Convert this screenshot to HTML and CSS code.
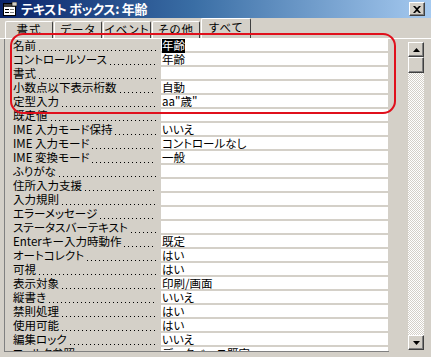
FILE: index.html
```html
<!DOCTYPE html>
<html lang="ja">
<head>
  <meta charset="UTF-8">
  <title>テキスト ボックス: 年齢</title>
  <link rel="stylesheet" href="styles.css">
</head>
<body>
  <div class="window">
    <div class="titlebar">
      <svg class="app-icon" width="14" height="14" viewBox="0 0 14 14">
        <rect x="0.5" y="1.5" width="12" height="12" fill="#fff" stroke="#000"/>
        <rect x="1" y="2" width="11" height="3" fill="#404040"/>
        <rect x="2" y="7" width="4" height="1" fill="#000"/>
        <rect x="7" y="7" width="4" height="1" fill="#808080"/>
        <rect x="2" y="10" width="4" height="1" fill="#000"/>
        <rect x="7" y="10" width="4" height="1" fill="#808080"/>
        <rect x="9" y="0" width="5" height="4" fill="#d4d0c8" stroke="#000" stroke-width="0.6"/>
      </svg>
      <span class="title">テキスト ボックス: 年齢</span>
      <div class="close">
        <svg width="8" height="7" viewBox="0 0 8 7">
          <path d="M0 0 L2 0 L4 2 L6 0 L8 0 L5 3.5 L8 7 L6 7 L4 5 L2 7 L0 7 L3 3.5 Z" fill="#000"/>
        </svg>
      </div>
    </div>

    <div class="tabs">
      <span class="tab">書式</span>
      <span class="tab">データ</span>
      <span class="tab">イベント</span>
      <span class="tab">その他</span>
      <span class="tab active">すべて</span>
    </div>

    <div class="sheet">
      <div class="props">
        <div class="row"><div class="name"><span>名前</span><i class="dots"></i></div><div class="value"><span class="sel">年齢</span></div></div>
        <div class="row"><div class="name"><span>コントロールソース</span><i class="dots"></i></div><div class="value">年齢</div></div>
        <div class="row"><div class="name"><span>書式</span><i class="dots"></i></div><div class="value"></div></div>
        <div class="row"><div class="name"><span>小数点以下表示桁数</span><i class="dots"></i></div><div class="value">自動</div></div>
        <div class="row"><div class="name"><span>定型入力</span><i class="dots"></i></div><div class="value">aa"歳"</div></div>
        <div class="row"><div class="name"><span>既定値</span><i class="dots"></i></div><div class="value"></div></div>
        <div class="row"><div class="name"><span>IME 入力モード保持</span><i class="dots"></i></div><div class="value">いいえ</div></div>
        <div class="row"><div class="name"><span>IME 入力モード</span><i class="dots"></i></div><div class="value">コントロールなし</div></div>
        <div class="row"><div class="name"><span>IME 変換モード</span><i class="dots"></i></div><div class="value">一般</div></div>
        <div class="row"><div class="name"><span>ふりがな</span><i class="dots"></i></div><div class="value"></div></div>
        <div class="row"><div class="name"><span>住所入力支援</span><i class="dots"></i></div><div class="value"></div></div>
        <div class="row"><div class="name"><span>入力規則</span><i class="dots"></i></div><div class="value"></div></div>
        <div class="row"><div class="name"><span>エラーメッセージ</span><i class="dots"></i></div><div class="value"></div></div>
        <div class="row"><div class="name"><span>ステータスバーテキスト</span><i class="dots"></i></div><div class="value"></div></div>
        <div class="row"><div class="name"><span>Enterキー入力時動作</span><i class="dots"></i></div><div class="value">既定</div></div>
        <div class="row"><div class="name"><span>オートコレクト</span><i class="dots"></i></div><div class="value">はい</div></div>
        <div class="row"><div class="name"><span>可視</span><i class="dots"></i></div><div class="value">はい</div></div>
        <div class="row"><div class="name"><span>表示対象</span><i class="dots"></i></div><div class="value">印刷/画面</div></div>
        <div class="row"><div class="name"><span>縦書き</span><i class="dots"></i></div><div class="value">いいえ</div></div>
        <div class="row"><div class="name"><span>禁則処理</span><i class="dots"></i></div><div class="value">はい</div></div>
        <div class="row"><div class="name"><span>使用可能</span><i class="dots"></i></div><div class="value">はい</div></div>
        <div class="row"><div class="name"><span>編集ロック</span><i class="dots"></i></div><div class="value">いいえ</div></div>
        <div class="row"><div class="name"><span>フィルタ参照</span><i class="dots"></i></div><div class="value">データベース既定</div></div>
      </div>

      <div class="scrollbar">
        <div class="sb-btn">
          <svg width="7" height="4" viewBox="0 0 7 4"><path d="M3.5 0 L7 4 L0 4 Z" fill="#000"/></svg>
        </div>
        <div class="sb-thumb"></div>
        <div class="sb-track"></div>
        <div class="sb-btn">
          <svg width="7" height="4" viewBox="0 0 7 4"><path d="M0 0 L7 0 L3.5 4 Z" fill="#000"/></svg>
        </div>
      </div>
    </div>

    <div class="highlight"></div>
  </div>
</body>
</html>
```

FILE: styles.css
```css
body { margin: 0; background: #d4d0c8; }
.window {
  position: relative;
  width: 431px;
  height: 357px;
  overflow: hidden;
  background: #d4d0c8;
  font-family: "Noto Sans CJK JP", "Liberation Sans", sans-serif;
  font-feature-settings: "palt";
  font-size: 11.5px;
  color: #000;
}

/* title bar */
.titlebar {
  height: 18px;
  display: flex;
  align-items: center;
  background: linear-gradient(90deg, #0a246a 0%, #3a6ea5 45%, #a6caf0 100%);
}
.app-icon { margin: 0 4px 0 3px; }
.title {
  color: #fff;
  font-weight: bold;
  font-size: 13px;
  line-height: 18px;
  letter-spacing: -0.3px;
}
.close {
  margin-left: auto;
  margin-right: 6px;
  width: 14px;
  height: 12px;
  display: flex;
  align-items: center;
  justify-content: center;
  background: #d4d0c8;
  border: 1px solid;
  border-color: #fff #404040 #404040 #fff;
  box-shadow: inset -1px -1px #808080;
}

/* tabs */
.tabs {
  height: 20px;
  display: flex;
  align-items: flex-end;
  padding-left: 5px;
}
.tab {
  box-sizing: border-box;
  width: 48px;
  height: 17px;
  margin-right: 1px;
  border-top: 1px solid #fff;
  border-left: 1px solid #fff;
  border-right: 1px solid #404040;
  border-radius: 2px 2px 0 0;
  text-align: center;
  line-height: 15px;
  letter-spacing: 1px;
}
.tab.active {
  height: 20px;
  width: 50px;
  line-height: 17px;
}

/* property sheet */
.sheet {
  display: flex;
  height: 313px;
  border-top: 1px solid #fff;
}
.props {
  width: 384px;
  margin-left: 4px;
  border-left: 1px solid #808080;
  border-bottom: 1px solid #808080;
  overflow: hidden;
}
.row {
  display: grid;
  grid-template-columns: 156px 227px;
  height: 14px;
  line-height: 13px;
}
.name {
  display: flex;
  padding-left: 8px;
  padding-right: 5px;
  white-space: nowrap;
}
.dots {
  flex: 1;
  min-width: 0;
  margin-left: 3px;
  background-image: linear-gradient(90deg, #000 1px, transparent 1px);
  background-size: 4px 1px;
  background-repeat: repeat-x;
  background-position: 0 11px;
}
.value {
  background: #fff;
  box-shadow: inset 0 -2px #d4d0c8;
  padding-left: 1px;
  white-space: nowrap;
}
.sel { background: #000; color: #fff; }

/* scrollbar */
.scrollbar {
  width: 16px;
  margin: 3px 0 0 19px;
  height: 308px;
  display: flex;
  flex-direction: column;
}
.sb-btn, .sb-thumb {
  box-sizing: border-box;
  height: 15px;
  background: #d4d0c8;
  border: 1px solid;
  border-color: #fff #404040 #404040 #fff;
  box-shadow: inset -1px -1px #808080;
  display: flex;
  align-items: center;
  justify-content: center;
}
.sb-thumb { height: 16px; }
.sb-track {
  flex: 1;
  background: repeating-conic-gradient(#d4d0c8 0 25%, #fff 0 50%) 0 0 / 2px 2px;
}

/* annotation overlay */
.highlight {
  position: absolute;
  left: 10px;
  top: 33px;
  width: 386px;
  height: 81px;
  box-sizing: border-box;
  border: 2px solid #e0101c;
  border-radius: 13px;
}
```
